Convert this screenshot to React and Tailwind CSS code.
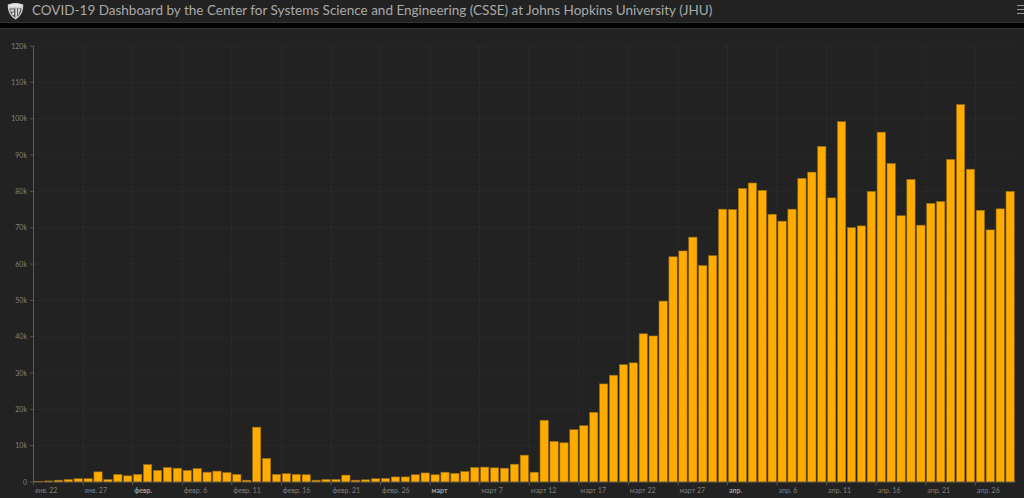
import React from 'react';

// daily values in thousands, first bar is jan 22
const values = [
  0.2, 0.3, 0.5, 0.7, 0.9, 0.9, 2.8, 0.7, 2.1, 1.7,
  2.1, 4.8, 3.2, 4.0, 3.8, 3.2, 3.7, 2.7, 3.0, 2.6,
  2.1, 0.5, 15.1, 6.5, 2.1, 2.3, 2.1, 2.0, 0.5, 0.7,
  0.7, 1.9, 0.5, 0.6, 0.9, 1.0, 1.4, 1.4, 2.0, 2.5,
  2.0, 2.7, 2.4, 2.9, 4.0, 4.1, 3.9, 3.8, 4.9, 7.4,
  2.7, 17.0, 11.2, 10.8, 14.4, 15.5, 19.2, 27.0, 29.4, 32.3,
  32.8, 40.8, 40.2, 49.8, 62.0, 63.6, 67.4, 59.6, 62.3, 75.1,
  75.0, 80.8, 82.3, 80.3, 73.7, 71.8, 75.1, 83.6, 85.3, 92.4,
  78.2, 99.2, 70.0, 70.5, 80.0, 96.3, 87.7, 73.3, 83.3, 70.7,
  76.7, 77.2, 88.8, 103.9, 86.1, 74.8, 69.4, 75.2, 80.0,
];

const xLabels = [
  'янв. 22', 'янв. 27', 'февр.', 'февр. 6', 'февр. 11', 'февр. 16', 'февр. 21', 'февр. 26',
  'март', 'март 7', 'март 12', 'март 17', 'март 22', 'март 27',
  'апр.', 'апр. 6', 'апр. 11', 'апр. 16', 'апр. 21', 'апр. 26',
];

const left = 33.5;
const step = 9.914;
const base = 482;
const perK = 3.633;
const yTicks = [0, 10, 20, 30, 40, 50, 60, 70, 80, 90, 100, 110, 120];

function Chart() {
  return (
    <svg viewBox="0 29 1024 469" className="block w-full h-full" style={{ fontFamily: 'Lato, "Noto Sans", sans-serif' }}>
      {yTicks.slice(1).map((t) => (
        <line key={t} x1={left} x2={1016} y1={base - t * perK} y2={base - t * perK} stroke="#363636" strokeWidth="0.6" strokeDasharray="2 2" />
      ))}
      {xLabels.map((l, i) => {
        const x = left + i * 5 * step;
        return (
          <g key={l}>
            {i > 0 && <line x1={x} x2={x} y1={46} y2={base} stroke="#363636" strokeWidth="0.6" strokeDasharray="2 2" />}
            <line x1={x} x2={x} y1={base} y2={485.5} stroke="#666666" strokeWidth="0.7" />
            <text x={x + 1.5} y={492.5} fontSize="7" fill={l.length < 6 ? '#a0a0a0' : '#808080'} fontWeight={l.length < 6 ? 700 : 400}>{l}</text>
          </g>
        );
      })}
      {values.map((v, i) => {
        const h = v * perK;
        return (
          <rect key={i} x={left + i * step + 0.9} y={base - h} width={8.3} height={h} fill="#ffab00" stroke="#8f6a14" strokeWidth="0.6" />
        );
      })}
      <line x1={left} x2={left} y1={46} y2={base} stroke="#6a6a6a" strokeWidth="0.8" />
      <line x1={left} x2={1016} y1={base} y2={base} stroke="#5c5c5c" strokeWidth="0.7" />
      {yTicks.map((t) => (
        <g key={t}>
          <line x1={30} x2={left} y1={base - t * perK} y2={base - t * perK} stroke="#6a6a6a" strokeWidth="0.7" />
          <text x={27} y={base - t * perK + 2.5} fontSize="7" textAnchor="end" fill="#808080">{t === 0 ? '0' : `${t}k`}</text>
        </g>
      ))}
    </svg>
  );
}

function Shield() {
  return (
    <svg width="17" height="18" viewBox="0 0 17 18" className="shrink-0">
      <path d="M0.8 2.6 C5 0.5 12 0.5 16.2 2.6 C16.6 9 14 14.6 8.5 17.6 C3 14.6 0.4 9 0.8 2.6 Z" fill="#d4d4d4" />
      <path d="M2.4 6.4 H14.6 C14.4 10.2 12.6 13.6 8.5 16 C4.4 13.6 2.6 10.2 2.4 6.4 Z" fill="#565656" />
      <path d="M3 3.2 C6.4 2.2 10.6 2.2 14 3.2 L14 4.6 C10.6 3.7 6.4 3.7 3 4.6 Z" fill="#f0f0f0" />
      <path d="M3.4 7.6 H7 V9.6 H3.4 Z M4.6 10.6 H7 V13 H5.4 Z M8.4 6.4 H10 V15.6 H8.4 Z M11 7 H13.4 L11.4 13 H11 Z" fill="#dcdcdc" />
    </svg>
  );
}

export default function App() {
  return (
    <div className="flex flex-col w-[1024px] h-[498px] overflow-hidden bg-black">
      <header className="flex items-center h-[23px] shrink-0 bg-[#222222] border-b border-[#333333] pl-[7px]">
        <Shield />
        <h1 className="ml-[8px] text-[13.5px] leading-none font-normal text-[#a9a9a9] whitespace-nowrap" style={{ fontFamily: 'Lato, "Noto Sans", sans-serif' }}>
          COVID-19 Dashboard by the Center for Systems Science and Engineering (CSSE) at Johns Hopkins University (JHU)
        </h1>
        <div className="ml-auto flex flex-col gap-[2.5px] w-[7px] -mt-[3px]">
          <span className="h-[1.5px] bg-[#9a9a9a]" />
          <span className="h-[1.5px] bg-[#9a9a9a]" />
          <span className="h-[1.5px] bg-[#9a9a9a]" />
        </div>
      </header>
      <div className="h-[5px] shrink-0 bg-black" />
      <main className="flex-1 min-h-0 bg-[#222222] border-t border-[#333333]">
        <Chart />
      </main>
    </div>
  );
}
